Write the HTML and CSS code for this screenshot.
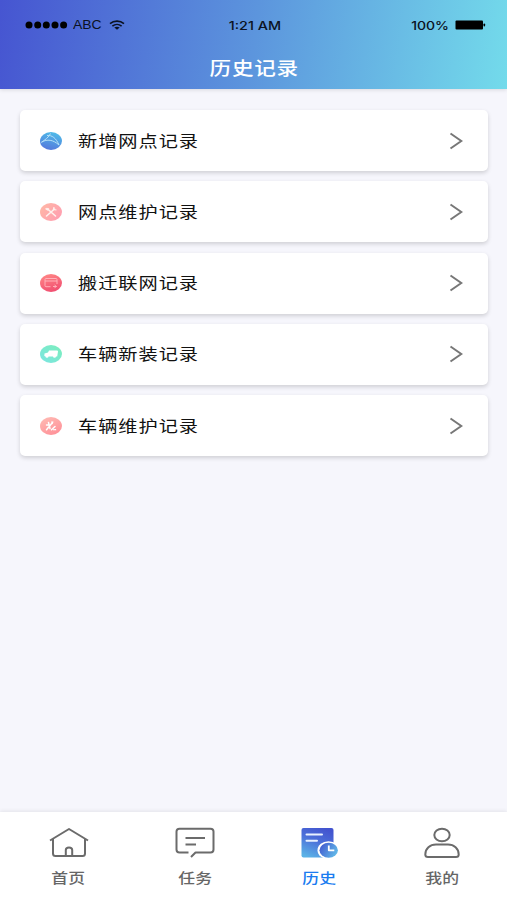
FILE: index.html
```html
<!DOCTYPE html>
<html lang="zh-CN">
<head>
  <meta charset="UTF-8">
  <title>历史记录</title>
  <link rel="stylesheet" href="styles.css">
</head>
<body>
  <!-- 顶部 -->
  <header class="header">
    <div class="status-bar">
      <div class="status-left">
        <svg width="43" height="8" viewBox="0 0 43 8">
          <circle cx="4" cy="4" r="3.5"/><circle cx="12.7" cy="4" r="3.5"/><circle cx="21.3" cy="4" r="3.5"/><circle cx="30" cy="4" r="3.5"/><circle cx="38.6" cy="4" r="3.5"/>
        </svg>
        <span class="carrier">ABC</span>
        <svg class="wifi" width="16" height="10" viewBox="0 0 16 10" fill="none" stroke="#0b1222" stroke-width="1.6">
          <path d="M1 3.7C5 .2 11 .2 15 3.7M3.4 6.1c2.7-2.2 6.5-2.2 9.2 0"/>
          <path d="M5.3 7.5L8 9.8l2.700-2.300C9 6.500 7 6.500 5.300 7.500z" fill="#0b1222" stroke="none"/>
        </svg>
      </div>
      <span class="time">1:21 AM</span>
      <div class="status-right">
        <span class="percent">100%</span>
        <svg width="31" height="10" viewBox="0 0 31 10">
          <rect x="0.5" y="0.5" width="27.5" height="9" rx="1"/><rect x="28.5" y="3.5" width="1.6" height="3" rx="0.8"/>
        </svg>
      </div>
    </div>
    <h1 class="title">历史记录</h1>
  </header>

  <!-- 记录列表 -->
  <main class="list">
    <a class="card">
      <svg class="card-icon" viewBox="0 0 22 18">
        <defs><linearGradient id="net" x1="0.7" y1="0" x2="0.4" y2="1"><stop offset="0" stop-color="#4fbde9"/><stop offset="1" stop-color="#5479dc"/></linearGradient></defs>
        <ellipse cx="11" cy="9" rx="11" ry="9" fill="url(#net)"/>
        <path d="M1 10.5C5 8 9 5 10.500 1.500M7 3.500c5-.5 9 2.500 12 9.500M2 10c5-3 11-2.500 17 3" fill="none" stroke="#b5e0f7" stroke-width="1"/>
      </svg>
      <span class="card-text">新增网点记录</span>
      <svg class="arrow" viewBox="0 0 14 18"><path d="M1.500 1.500L12.300 9 1.500 16.500"/></svg>
    </a>
    <a class="card">
      <svg class="card-icon" viewBox="0 0 22 18">
        <defs><linearGradient id="tool" x1="0" y1="0" x2="1" y2="0.6"><stop offset="0" stop-color="#ffb9a5"/><stop offset="1" stop-color="#ffa0b0"/></linearGradient></defs>
        <ellipse cx="11" cy="9" rx="11" ry="9" fill="url(#tool)"/>
        <path d="M6.500 13L14.500 6M7 5.500l8.500 7.500" stroke="#fff1ee" stroke-width="1.600" stroke-linecap="round"/>
        <path d="M5.500 5.500l2 1.500 1.500-1.500M14 4l-.5 2.500 3 .5" fill="none" stroke="#fff1ee" stroke-width="1.200"/>
      </svg>
      <span class="card-text">网点维护记录</span>
      <svg class="arrow" viewBox="0 0 14 18"><path d="M1.500 1.500L12.300 9 1.500 16.500"/></svg>
    </a>
    <a class="card">
      <svg class="card-icon" viewBox="0 0 22 18">
        <defs><linearGradient id="move" x1="0.3" y1="0" x2="0.7" y2="1"><stop offset="0" stop-color="#ff8585"/><stop offset="1" stop-color="#f04c70"/></linearGradient></defs>
        <ellipse cx="11" cy="9" rx="11" ry="9" fill="url(#move)"/>
        <path d="M10.500 12.700H6q-1 0-1-1V5.500q0-1 1-1h10q1 0 1 1V10M5 7h12M13 12.500h3.500M14.500 11l2 1.500-2 1.200" fill="none" stroke="#ffb0b8" stroke-width="1"/>
      </svg>
      <span class="card-text">搬迁联网记录</span>
      <svg class="arrow" viewBox="0 0 14 18"><path d="M1.500 1.500L12.300 9 1.500 16.500"/></svg>
    </a>
    <a class="card">
      <svg class="card-icon" viewBox="0 0 22 18">
        <defs><linearGradient id="car" x1="1" y1="0" x2="0" y2="1"><stop offset="0" stop-color="#7beebb"/><stop offset="1" stop-color="#7ce5e3"/></linearGradient></defs>
        <ellipse cx="11" cy="9" rx="11" ry="9" fill="url(#car)"/>
        <path d="M9 5.500h8q1 0 1 1l-.8 5h-1.200a1.500 1.300 0 0 1-3 0H8.500a1.500 1.300 0 0 1-3 0l-1.200-.5.200-2.500L8 7.500z" fill="#fff"/>
      </svg>
      <span class="card-text">车辆新装记录</span>
      <svg class="arrow" viewBox="0 0 14 18"><path d="M1.500 1.500L12.300 9 1.500 16.500"/></svg>
    </a>
    <a class="card">
      <svg class="card-icon" viewBox="0 0 22 18">
        <defs><linearGradient id="fix" x1="0" y1="0" x2="0.6" y2="1"><stop offset="0" stop-color="#ffbdb5"/><stop offset="1" stop-color="#ff939a"/></linearGradient></defs>
        <ellipse cx="11" cy="9" rx="11" ry="9" fill="url(#fix)"/>
        <path d="M6.500 12.800L12.500 5.500M8.500 5.500l1.500 6M11.500 12.800l3.500-3.300M6.500 8h3" stroke="#fff" stroke-width="1.500" stroke-linecap="round"/>
        <path d="M11 4.500h2.500l-1 3zM13 12.300l3-.3.300 1.200h-3.300z" fill="#fff"/>
      </svg>
      <span class="card-text">车辆维护记录</span>
      <svg class="arrow" viewBox="0 0 14 18"><path d="M1.500 1.500L12.300 9 1.500 16.500"/></svg>
    </a>
  </main>

  <!-- 底部导航 -->
  <nav class="tabbar">
    <a class="tab">
      <svg class="tab-icon" viewBox="0 0 40 32">
        <path d="M1 13.500L20 2l19 11.500M4 12v14.500q0 2.500 2.500 2.500h27q2.500 0 2.500-2.500V12M16.800 29v-6q0-2.500 3.200-2.500t3.200 2.500v6"/>
      </svg>
      <span>首页</span>
    </a>
    <a class="tab">
      <svg class="tab-icon" viewBox="0 0 40 32">
        <path d="M13.500 25.500H4.500Q1.500 25.500 1.500 22.500V4.500Q1.500 1.700 4.500 1.700h31q3 0 3 2.800v18q0 3-3 3H20.500l-4.500 4.500M10.500 11h19.500M10.500 17.500h10.500"/>
      </svg>
      <span>任务</span>
    </a>
    <a class="tab active">
      <svg class="tab-icon solid" viewBox="0 0 40 32">
        <defs>
          <linearGradient id="doc" x1="0.7" y1="0" x2="0.25" y2="1"><stop offset="0" stop-color="#4354cf"/><stop offset="0.45" stop-color="#4b70d9"/><stop offset="1" stop-color="#5bb2e6"/></linearGradient>
          <linearGradient id="clock" x1="0" y1="0" x2="1" y2="0.5"><stop offset="0" stop-color="#3e50cd"/><stop offset="1" stop-color="#60b5e7"/></linearGradient>
        </defs>
        <rect x="1.500" y="1" width="32" height="29.500" rx="2" fill="url(#doc)"/>
        <path d="M6.500 7.500h15.500M6.500 13.800h10.500" stroke="#e9f2ff" stroke-width="2" stroke-linecap="round"/>
        <ellipse cx="28.500" cy="23.200" rx="11" ry="9" fill="#fff"/>
        <ellipse cx="28.700" cy="23.200" rx="9.200" ry="7.500" fill="url(#clock)"/>
        <path d="M28.800 18.500v4.800h5.500" fill="none" stroke="#fff" stroke-width="1.800"/>
      </svg>
      <span>历史</span>
    </a>
    <a class="tab">
      <svg class="tab-icon" viewBox="0 0 40 32">
        <ellipse cx="20" cy="8" rx="7.700" ry="6.300"/>
        <path d="M6 30q-2.700 0-2.700-2.500C3.300 21.500 8 17.500 14 17.500h12c6 0 10.700 4 10.700 10q0 2.500-2.700 2.500z"/>
      </svg>
      <span>我的</span>
    </a>
  </nav>
</body>
</html>
```

FILE: styles.css
```css
* {
  box-sizing: border-box;
}
body {
  margin: 0;
  height: 900px;
  display: flex;
  flex-direction: column;
  background: #f6f6fc;
  font-family: "Noto Sans CJK SC", sans-serif;
}
svg {
  display: block;
  flex: none;
}
/* 顶部 */
.header {
  display: flex;
  flex-direction: column;
  align-items: center;
  height: 89px;
  flex: none;
  background: linear-gradient(98deg, #4655d1 0%, #5c95dd 50%, #73dbeb 100%);
  box-shadow: 0 1px 4px rgba(0, 0, 0, 0.12);
}
.status-bar {
  display: grid;
  grid-template-columns: 1fr auto 1fr;
  align-items: center;
  width: 100%;
  height: 29px;
  padding: 18px 21px 0 23px;
  color: #0b1222;
  font: 500 11.5px/12px Inter, sans-serif;
}
.status-left,
.status-right {
  display: flex;
  align-items: center;
}
.status-left {
  padding-left: 2px;
}
.status-right {
  justify-content: flex-end;
  gap: 6px;
}
.carrier {
  width: 36px;
  margin-left: 5px;
  font: 12px/12px "Liberation Sans", sans-serif;
  transform: scaleX(1.16);
  transform-origin: left;
}
.time {
  padding-top: 2px;
  transform: scaleX(1.25);
}
.percent {
  padding-top: 2px;
  transform: scaleX(1.22);
  transform-origin: right;
}
.title {
  margin: 24px 0 0 2px;
  color: #fff;
  font-size: 18px;
  line-height: 28px;
  font-weight: 500;
  letter-spacing: 0.6px;
  transform: scaleX(1.2);
}
/* 列表 */
.list {
  flex: 1;
  display: flex;
  flex-direction: column;
  gap: 10.3px;
  padding: 21px 19px 0 20px;
}
.card {
  display: flex;
  align-items: center;
  height: 61px;
  padding: 0 25px 0 20px;
  background: #fff;
  border-radius: 5px;
  box-shadow: 0 2px 4px rgba(0, 0, 0, 0.16);
}
.card-icon {
  width: 22px;
  height: 18px;
}
.card-text {
  margin-left: 16px;
  padding-bottom: 2px;
  color: #111;
  font-size: 16px;
  line-height: 24px;
  letter-spacing: 0.8px;
  transform: scaleX(1.2);
  transform-origin: left;
}
.arrow {
  width: 14px;
  height: 18px;
  margin-left: auto;
  fill: none;
  stroke: #777;
  stroke-width: 2;
}
/* 底部导航 */
.tabbar {
  height: 88px;
  flex: none;
  display: grid;
  grid-template-columns: 127px 126px 123px 122px;
  padding: 15px 0 0 5px;
  background: #fff;
  box-shadow: 0 -1px 4px rgba(0, 0, 0, 0.08);
}
.tab {
  display: flex;
  flex-direction: column;
  align-items: center;
  gap: 8px;
  color: #666;
  font-size: 14px;
  line-height: 20px;
  font-weight: 500;
}
.tab span {
  letter-spacing: 0.3px;
  transform: scaleX(1.2);
}
.tab-icon {
  width: 40px;
  height: 32px;
  fill: none;
  stroke: #6b6b6b;
  stroke-width: 2;
  stroke-linejoin: round;
}
.tab-icon.solid {
  stroke: none;
}
.tab.active {
  color: #1a7cf0;
}
```
